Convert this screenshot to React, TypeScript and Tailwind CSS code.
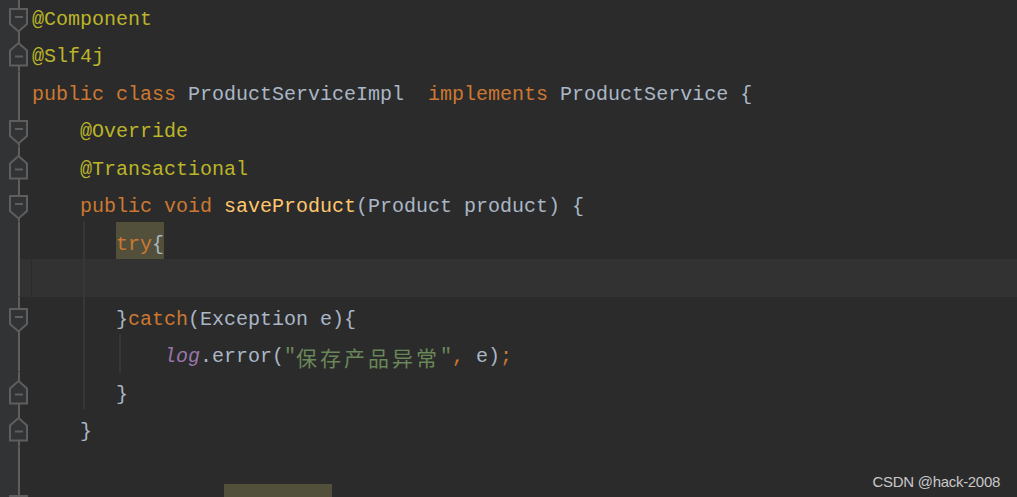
import React from "react";

type Marker = "down" | "up" | null;

const ann = "text-[#BBB529]";
const kw = "text-[#CC7832]";
const id = "text-[#A9B7C6]";
const fn = "text-[#FFC66D]";
const str = "text-[#6A8759]";
const fld = "text-[#9876AA] italic";

function Gutter({ marker, current }: { marker: Marker; current?: boolean }) {
  const stroke = "#5e5e5e";
  let shape: React.ReactNode = null;
  if (marker === "down") {
    const y = 11;
    shape = (
      <g>
        <path
          d={`M10 ${y + 1} H27 V${y + 16} L18.5 ${y + 23.5} L10 ${y + 16} Z`}
          fill="#313335"
          stroke={stroke}
          strokeWidth={2}
        />
        <rect x={15} y={y + 8} width={8} height={2} fill={stroke} />
      </g>
    );
  } else if (marker === "up") {
    const y = 8.5;
    shape = (
      <g>
        <path
          d={`M18.5 ${y + 0.5} L27 ${y + 8} V${y + 23} H10 V${y + 8} Z`}
          fill="#313335"
          stroke={stroke}
          strokeWidth={2}
        />
        <rect x={15} y={y + 13} width={8} height={2} fill={stroke} />
      </g>
    );
  }
  return (
    <svg width={32} height={37.5} viewBox="0 0 32 37.5" className="shrink-0 block">
      {current && <rect x={20} y={0} width={12} height={37.5} fill="#323232" />}
      {current && <rect x={31} y={0} width={1} height={37.5} fill="#2b2b2b" />}
      <rect x={18} y={0} width={2} height={37.5} fill={stroke} />
      {shape}
    </svg>
  );
}

function Seg({ children, className = "" }: { children?: React.ReactNode; className?: string }) {
  return <span className={`flex items-center pt-[9px] whitespace-pre ${className}`}>{children}</span>;
}

type Row = {
  marker: Marker;
  current?: boolean;
  guides?: number[];
  code: React.ReactNode;
};

const rows: Row[] = [
  { marker: "down", code: <Seg><span className={ann}>@Component</span></Seg> },
  { marker: "up", code: <Seg><span className={ann}>@Slf4j</span></Seg> },
  {
    marker: null,
    code: (
      <Seg>
        <span className={kw}>public class </span>
        <span className={id}>ProductServiceImpl  </span>
        <span className={kw}>implements </span>
        <span className={id}>ProductService {"{"}</span>
      </Seg>
    ),
  },
  { marker: "down", code: <Seg className="pl-[48px]"><span className={ann}>@Override</span></Seg> },
  { marker: "up", code: <Seg className="pl-[48px]"><span className={ann}>@Transactional</span></Seg> },
  {
    marker: "down",
    code: (
      <Seg className="pl-[48px]">
        <span className={kw}>public void </span>
        <span className={fn}>saveProduct</span>
        <span className={id}>(Product product) {"{"}</span>
      </Seg>
    ),
  },
  {
    marker: null,
    guides: [51],
    code: (
      <Seg className="ml-[84px] bg-[#52503A]">
        <span className={kw}>try</span>
        <span className={id}>{"{"}</span>
      </Seg>
    ),
  },
  { marker: null, current: true, guides: [51], code: null },
  {
    marker: "down",
    guides: [51],
    code: (
      <Seg className="pl-[84px]">
        <span className={id}>{"}"}</span>
        <span className={kw}>catch</span>
        <span className={id}>(Exception e){"{"}</span>
      </Seg>
    ),
  },
  {
    marker: null,
    guides: [51, 87],
    code: (
      <Seg className="pl-[132px]">
        <span className={fld}>log</span>
        <span className={id}>.error(</span>
        <span className={str}>"</span>
        <span className={`${str} font-['Noto_Sans_CJK_SC',sans-serif] text-[21px] tracking-[3px]`}>保存产品异常</span>
        <span className={str}>"</span>
        <span className={kw}>,</span>
        <span className={id}> e)</span>
        <span className={kw}>;</span>
      </Seg>
    ),
  },
  { marker: "up", guides: [51], code: <Seg className="pl-[84px]"><span className={id}>{"}"}</span></Seg> },
  { marker: "up", code: <Seg className="pl-[48px]"><span className={id}>{"}"}</span></Seg> },
  { marker: null, code: null },
  {
    marker: "down",
    code: (
      <>
        <Seg className="ml-[192px] w-[108px] bg-[#52503A]" />
        <Seg>
          <span className={id}>(</span>
          <span className="inline-block w-[180px]" />
          <span className={id}>) {"{"}</span>
        </Seg>
      </>
    ),
  },
];

export default function App() {
  return (
    <div className="relative w-[1017px] h-[497px] overflow-hidden bg-[linear-gradient(to_right,#313335_20px,#2b2b2b_20px)] font-['Liberation_Mono',monospace] text-[20px] leading-none">
      <div className="flex flex-col mt-[-3.5px]">
        {rows.map((r, i) => (
          <div
            key={i}
            className={`flex h-[37.5px] shrink-0 ${r.current ? "bg-[linear-gradient(to_right,#313335_20px,#323232_20px)]" : ""}`}
          >
            <Gutter marker={r.marker} current={r.current} />
            <div className="relative flex flex-1 items-stretch h-full">
              {r.guides?.map((g) => (
                <span
                  key={g}
                  className={`absolute top-0 bottom-0 w-[2px] bg-[#373737] ${g === 51 ? "left-[51px]" : "left-[87px]"}`}
                />
              ))}
              <div className="relative flex items-stretch h-full">{r.code}</div>
            </div>
          </div>
        ))}
      </div>
      <div className="absolute right-[17px] bottom-[8px] font-['Liberation_Sans',sans-serif] text-[15px] tracking-[-0.3px] text-[#c8c8c8] leading-none">
        CSDN @hack-2008
      </div>
    </div>
  );
}
